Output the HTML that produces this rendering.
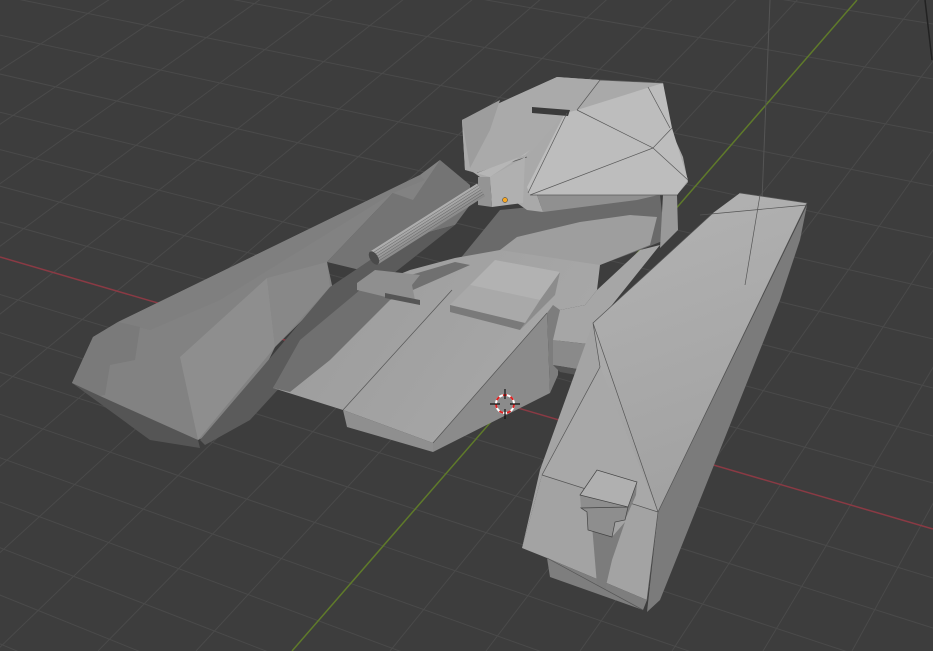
<!DOCTYPE html>
<html><head><meta charset="utf-8"><style>
html,body{margin:0;padding:0;background:#3d3d3d;width:933px;height:651px;overflow:hidden}
svg{display:block;position:absolute;left:0;top:0}
</style></head><body>
<svg width="933" height="651" viewBox="0 0 933 651" xmlns="http://www.w3.org/2000/svg">
<defs>
<linearGradient id="trk" x1="0" y1="0" x2="0.3" y2="1"><stop offset="0" stop-color="#b4b4b4"/><stop offset="1" stop-color="#a2a2a2"/></linearGradient>
<linearGradient id="brl" x1="0" y1="0" x2="0" y2="1"><stop offset="0" stop-color="#b0b0b0"/><stop offset="1" stop-color="#8a8a8a"/></linearGradient>
<linearGradient id="hull" x1="0" y1="0" x2="1" y2="0.4"><stop offset="0" stop-color="#9a9a9a"/><stop offset="1" stop-color="#a8a8a8"/></linearGradient>
</defs>
<rect width="933" height="651" fill="#3d3d3d"/>
<g stroke="#4a4a4a" stroke-width="1" fill="none">
<path d="M1813,-1100L-900,651 M1813,-1100L-780,651 M1813,-1100L-660,651 M1813,-1100L-545,651 M1813,-1100L-432,651 M1813,-1100L-322,651 M1813,-1100L-214,651 M1813,-1100L-108,651 M1813,-1100L-4,651 M1813,-1100L98,651 M1813,-1100L196,651 M1813,-1100L390,651 M1813,-1100L486,651 M1813,-1100L580,651 M1813,-1100L672,651 M1813,-1100L763,651 M1813,-1100L852,651 M1813,-1100L940,651 M1813,-1100L1026,651 M1813,-1100L1110,651 M1813,-1100L1192,651 M1813,-1100L1272,651 M1813,-1100L1350,651"/>
<path d="M-3000,-617L933,-150 M-3000,-617L933,-90 M-3000,-617L933,-32 M-3000,-617L933,24 M-3000,-617L933,79 M-3000,-617L933,133 M-3000,-617L933,186 M-3000,-617L933,238 M-3000,-617L933,289 M-3000,-617L933,339 M-3000,-617L933,388 M-3000,-617L933,436 M-3000,-617L933,483 M-3000,-617L933,578 M-3000,-617L933,628 M-3000,-617L933,680 M-3000,-617L933,735 M-3000,-617L933,792 M-3000,-617L933,850 M-3000,-617L933,910 M-3000,-617L933,972 M-3000,-617L933,1036 M-3000,-617L933,1102"/>
</g>
<line x1="0" y1="257" x2="933" y2="529" stroke="#8a3a44" stroke-width="1.5"/>
<line x1="292" y1="651" x2="857" y2="0" stroke="#5f7a2a" stroke-width="1.5"/>
<line x1="770" y1="0" x2="762" y2="200" stroke="#555" stroke-width="1"/>
<line x1="925" y1="0" x2="932" y2="60" stroke="#222" stroke-width="1.5"/>

<!-- left fender -->
<polygon points="327,262 393,193 420,175 440,160 470,185 470,205 455,225 400,240 360,270" fill="#747474"/>
<polygon points="72,383 93,337 118,322 420,175 440,160 413,200 393,193 327,262 333,290 275,347 240,420 198,440 150,425" fill="#828282"/>
<polygon points="118,322 420,175 425,180 393,193 220,300 150,330" fill="#7f7f7f"/>
<polygon points="72,383 93,337 118,322 140,327 135,360 110,365 105,395 100,396" fill="#7a7a7a"/>
<polygon points="180,357 267,278 275,347 198,440" fill="#8e8e8e"/>
<polygon points="267,278 327,262 330,287 275,347" fill="#888"/>
<polygon points="72,383 100,396 198,440 200,448 150,440" fill="#555"/>
<polygon points="330,287 400,240 455,225 360,300 250,420 205,445 200,440 260,370" fill="#5b5b5b"/>

<!-- hull neck -->
<polygon points="500,210 600,200 660,195 665,240 640,250 600,265 520,300 470,290 455,265" fill="#6a6a6a"/>
<polygon points="517,237 580,222 630,215 657,217 650,245 600,265 560,275 520,270 500,250" fill="#9e9e9e"/>
<polygon points="663,195 677,195 678,230 660,248" fill="#999"/>

<!-- hull -->
<polygon points="273,388 300,345 360,290 410,270 455,258 500,250 600,265 597,290 585,305 560,310 547,313 433,443 343,410" fill="url(#hull)"/>
<polygon points="300,340 360,290 455,262 470,265 390,300 330,360 290,392 273,388" fill="#707070"/>
<polygon points="343,410 347,427 433,452 433,443" fill="#8f8f8f"/>
<polygon points="433,443 433,452 550,393 547,313" fill="#8b8b8b"/>
<polygon points="550,393 547,313 553,305 560,310 558,375" fill="#7d7d7d"/>
<polygon points="553,340 595,345 595,372 553,365" fill="#8a8a8a"/>
<polygon points="553,365 595,372 593,378 560,372" fill="#555"/>
<polygon points="597,290 640,250 660,245 600,320 596,345 553,340 560,310 585,305" fill="#a6a6a6"/>
<line x1="343" y1="410" x2="452" y2="290" stroke="#555" stroke-width="0.7"/>
<line x1="433" y1="443" x2="547" y2="313" stroke="#555" stroke-width="0.7"/>
<polygon points="450,305 470,285 540,300 525,323" fill="#a9a9a9"/>
<polygon points="470,285 495,260 560,272 540,300" fill="#b2b2b2"/>
<polygon points="450,305 450,312 520,330 525,323" fill="#7a7a7a"/>
<polygon points="525,323 520,330 555,295 560,272 540,300" fill="#8c8c8c"/>
<polygon points="357,283 375,270 420,275 412,285 415,300 390,298 357,290" fill="#8f8f8f"/>
<polygon points="385,293 420,300 420,305 385,298" fill="#555"/>

<!-- turret -->
<polygon points="462,120 557,77 600,80 663,83 670,128 683,157 688,182 677,195 663,195 537,195 543,212 527,210 470,170 465,170" fill="#a9a9a9"/>
<polygon points="537,195 663,195 667,193 637,200 543,212" fill="#909090"/>
<polygon points="565,113 577,110 663,83 672,128 688,180 677,195 530,195 527,187" fill="#bdbdbd"/>
<polygon points="462,120 557,77 600,80 577,110 565,113 527,157 477,173 465,170" fill="#aaaaaa"/>
<polygon points="462,120 500,100 490,130 470,168" fill="#9d9d9d"/>
<polygon points="532,107 570,110 568,116 532,113" fill="#3a3a3a"/>
<g stroke="#5a5a5a" stroke-width="0.7" fill="none">
<path d="M577,110 L653,148 L672,128 M653,148 L688,180 M653,148 L530,195 M567,113 L528,193 M577,110 L600,80 L663,83 M648,87 L670,128 M527,157 L477,173 M530,195 L677,195"/>
</g>
<polygon points="465,170 477,173 525,155 563,117 530,150 490,177" fill="#b6b6b6"/>
<polygon points="490,177 525,157 523,203 492,207" fill="#b0b0b0"/>
<polygon points="478,177 490,177 492,207 478,205" fill="#949494"/>
<circle cx="505" cy="200" r="2.5" fill="#f5a623" stroke="#333" stroke-width="0.5"/>
<g transform="translate(374,258) rotate(-32.5)">
<rect x="0" y="-7.5" width="127" height="15" fill="url(#brl)"/>
<g stroke="#6a6a6a" stroke-width="0.5"><line x1="0" y1="-5" x2="127" y2="-5"/><line x1="0" y1="-2.5" x2="127" y2="-2.5"/><line x1="0" y1="0" x2="127" y2="0"/><line x1="0" y1="2.5" x2="127" y2="2.5"/><line x1="0" y1="5" x2="127" y2="5"/></g>
<ellipse cx="0" cy="0" rx="4" ry="7.5" fill="#4a4a4a"/>
</g>

<!-- right track -->
<polygon points="807,205 800,240 780,300 660,600 647,612 658,512" fill="#7b7b7b"/>
<polygon points="713,213 740,193 807,203 658,512 542,475 593,323" fill="url(#trk)"/>
<polygon points="593,323 600,367 542,475 522,548 540,470" fill="#a4a4a4"/>
<polygon points="542,475 658,512 647,600 547,558 522,548" fill="#a3a3a3"/>
<polygon points="600,367 658,512 542,475" fill="#a8a8a8"/>
<polygon points="547,558 550,577 643,610 647,600" fill="#7e7e7e"/>
<polygon points="592,525 612,537 625,522 612,560 605,590 597,585" fill="#7c7c7c"/>
<g stroke="#555" stroke-width="0.7" fill="none">
<path d="M713,213 L593,323 L658,512 M740,193 L807,203 L658,512 M542,475 L658,512 M593,323 L600,367 L542,475 M658,512 L647,600 M547,558 L643,610 M760,195 L745,285 M700,215 L807,205"/>
</g>
<polygon points="580,495 597,470 637,482 628,507" fill="#b0b0b0"/>
<polygon points="580,495 628,507 625,520 615,522 612,537 588,530 587,512 581,508" fill="#8e8e8e"/>
<polygon points="628,507 637,482 636,495 625,520" fill="#7f7f7f"/>
<g stroke="#444" stroke-width="0.7" fill="none"><path d="M580,495 L597,470 L637,482 L628,507 Z M628,507 L625,520 L615,522 L612,537 L588,530 L587,512 L581,508 Z"/></g>

<g transform="translate(505,404)">
<circle r="9" fill="none" stroke="#fff" stroke-width="2"/>
<circle r="9" fill="none" stroke="#d22" stroke-width="2" stroke-dasharray="4 4"/>
<path d="M0,-15V-5 M0,5V15 M-15,0H-5 M5,0H15" stroke="#111" stroke-width="1.2"/>
</g>
</svg>
</body></html>
